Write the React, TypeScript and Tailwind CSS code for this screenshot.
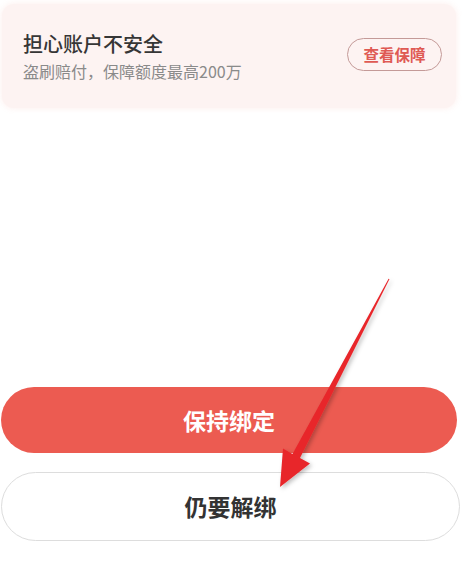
import React from "react";

const font = { fontFamily: '"Noto Sans CJK SC", "Noto Sans", sans-serif' };

export default function App() {
  return (
    <div className="relative w-[473px] h-[569px] overflow-hidden bg-white" style={font}>
      <div className="flex h-full flex-col">
        {/* Insurance card */}
        <div className="ml-[2px] mt-[4px] w-[454px] h-[104px] rounded-xl bg-[#fdf3f2] shadow-[0_0_6px_rgba(253,235,233,0.9)] flex items-center justify-between pl-[21px] pr-[14px]">
          <div className="flex flex-col">
            <span className="text-[20px] leading-[26px] font-medium text-[#363636]">担心账户不安全</span>
            <span className="mt-[3px] text-[16px] leading-[22px] text-[#8a8a8a]">盗刷赔付，保障额度最高200万</span>
          </div>
          <button className="mb-[3px] w-[95px] h-[33px] rounded-full border border-[#c49a98] text-[15.5px] font-semibold text-[#df5a54] flex items-center justify-center">
            查看保障
          </button>
        </div>

        <div className="flex-1" />

        {/* Actions */}
        <div className="flex flex-col pb-[28px]">
          <button className="ml-[1px] w-[456px] h-[66px] rounded-full bg-[#ec5b51] text-[23px] font-bold text-white flex items-center justify-center">
            保持绑定
          </button>
          <button className="ml-[1px] mt-[19px] w-[459px] h-[69px] rounded-full border border-[#dddddd] bg-white text-[23px] font-bold text-[#333333] flex items-center justify-center">
            仍要解绑
          </button>
        </div>
      </div>

      {/* Annotation arrow */}
      <svg className="absolute left-0 top-0 pointer-events-none" width="473" height="569" viewBox="0 0 473 569">
        <defs>
          <filter id="arrowShadow" x="-20%" y="-20%" width="140%" height="140%">
            <feDropShadow dx="2" dy="2" stdDeviation="2" floodColor="#000" floodOpacity="0.25" />
          </filter>
        </defs>
        <polygon
          points="389.5,279 300,458 310,463.5 280,487 283,448.5 292.5,454 388.6,278.8"
          fill="#e8262b"
          filter="url(#arrowShadow)"
        />
      </svg>
    </div>
  );
}
